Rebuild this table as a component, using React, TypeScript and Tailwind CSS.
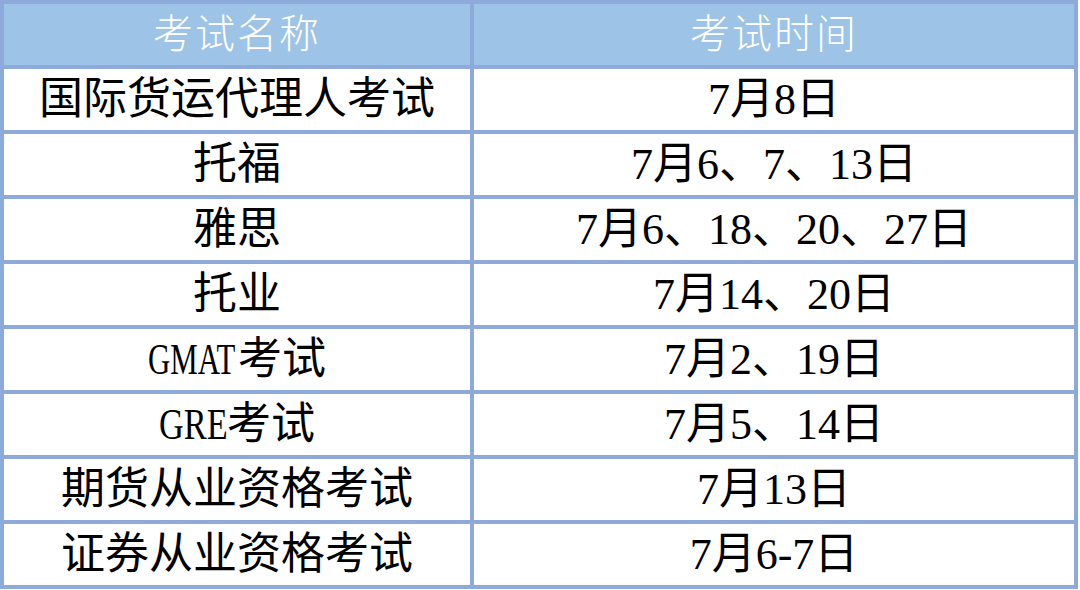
import { Fragment, type ReactNode } from "react";

// latin words in the name column are narrow half-width glyphs in the picture
function Narrow({ text, width, scale }: { text: string; width: number; scale: string }) {
  return (
    <span className="inline-block whitespace-nowrap" style={{ width }}>
      <span className={`inline-block origin-left ${scale}`}>{text}</span>
    </span>
  );
}

const rows: [ReactNode, string][] = [
  ["国际货运代理人考试", "7月8日"],
  ["托福", "7月6、7、13日"],
  ["雅思", "7月6、18、20、27日"],
  ["托业", "7月14、20日"],
  [<><Narrow text="GMAT" width={90} scale="scale-x-[0.7]" />考试</>, "7月2、19日"],
  [<><Narrow text="GRE" width={68} scale="scale-x-[0.78]" />考试</>, "7月5、14日"],
  ["期货从业资格考试", "7月13日"],
  ["证券从业资格考试", "7月6-7日"],
];

export default function App() {
  return (
    <div className="w-[1080px] h-[590px] bg-white">
      <div
        className="w-[1078px] grid grid-cols-[466px_600px] auto-rows-[61px] gap-[4px] p-[4px] bg-[#8eaadb]"
        style={{ fontFamily: '"Liberation Serif", "Noto Sans CJK SC", sans-serif' }}
      >
        <div className="bg-[#9dc3e6] flex items-center justify-center text-white text-[40px] tracking-[2px] font-light">
          考试名称
        </div>
        <div className="bg-[#9dc3e6] flex items-center justify-center text-white text-[40px] tracking-[2px] font-light">
          考试时间
        </div>
        {rows.map(([name, date], i) => (
          <Fragment key={i}>
            <div className="bg-white flex items-center justify-center text-black text-[44px] leading-none">
              {name}
            </div>
            <div className="bg-white flex items-center justify-center text-black text-[44px] leading-none">
              {date}
            </div>
          </Fragment>
        ))}
      </div>
    </div>
  );
}
